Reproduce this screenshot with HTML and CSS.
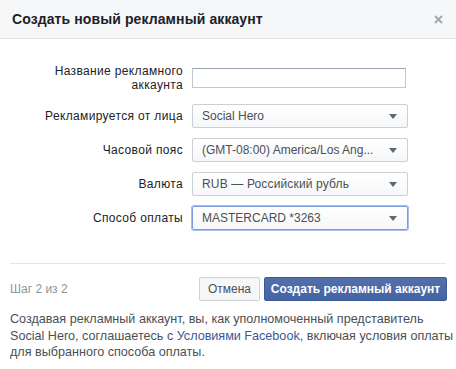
FILE: index.html
```html
<!DOCTYPE html>
<html lang="ru">
<head>
<meta charset="utf-8">
<link rel="stylesheet" href="styles.css">
</head>
<body>
<div class="dialog">
  <div class="header">
    <span class="title">Создать новый рекламный аккаунт</span>
    <span class="close">
      <svg width="9" height="9" viewBox="0 0 9 9"><path d="M1 1L8 8M8 1L1 8" stroke="#a3a6ab" stroke-width="1.8"/></svg>
    </span>
  </div>
  <div class="form">
    <div class="row row-first">
      <div class="label">Название рекламного<br>аккаунта</div>
      <div class="input"></div>
    </div>
    <div class="row">
      <div class="label">Рекламируется от лица</div>
      <div class="select"><span>Social Hero</span><i class="arrow"></i></div>
    </div>
    <div class="row">
      <div class="label">Часовой пояс</div>
      <div class="select"><span>(GMT-08:00) America/Los Ang...</span><i class="arrow"></i></div>
    </div>
    <div class="row">
      <div class="label">Валюта</div>
      <div class="select"><span class="cyr">RUB — Российский рубль</span><i class="arrow"></i></div>
    </div>
    <div class="row">
      <div class="label">Способ оплаты</div>
      <div class="select focus"><span>MASTERCARD *3263</span><i class="arrow"></i></div>
    </div>
  </div>
  <div class="footer">
    <span class="step">Шаг 2 из 2</span>
    <div class="buttons">
      <span class="btn cancel">Отмена</span>
      <span class="btn primary">Создать рекламный аккаунт</span>
    </div>
  </div>
  <p class="terms">Создавая рекламный аккаунт, вы, как уполномоченный представитель<br>Social Hero, соглашаетесь с <span class="link">Условиями Facebook</span>, включая условия оплаты<br>для выбранного способа оплаты.</p>
</div>
</body>
</html>
```
FILE: styles.css
```css
* { box-sizing: border-box; }
html, body { margin: 0; padding: 0; background: #fff; }
body {
  font-family: "Liberation Sans", Arial, sans-serif;
  font-size: 12px;
  color: #1d2129;
  width: 456px;
  height: 369px;
  overflow: hidden;
}
.header {
  height: 39px;
  background: #f6f7f9;
  border-bottom: 1px solid #e5e5e5;
  display: flex;
  align-items: center;
  justify-content: space-between;
  padding: 0 13px 0 12px;
}
.title {
  font-size: 14px;
  font-weight: bold;
  color: #1d2129;
  letter-spacing: 0.1px;
}
.close { display: flex; margin-top: 1px; }
.form {
  padding-top: 25px;
  display: flex;
  flex-direction: column;
  gap: 10px;
}
.row {
  display: flex;
  align-items: center;
}
.row-first { margin-bottom: 2px; }
.label {
  width: 183px;
  text-align: right;
  line-height: 14px;
  color: #1d2129;
  letter-spacing: 0.35px;
}
.input {
  margin-left: 9px;
  width: 214px;
  height: 20px;
  border: 1px solid #bdc7d8;
  border-top-color: #9aa4b6;
  background: #fff;
}
.select {
  margin-left: 9px;
  width: 216px;
  height: 24px;
  border: 1px solid #ccd0d5;
  border-radius: 2px;
  background: linear-gradient(#fff, #f6f7f9);
  display: flex;
  align-items: center;
  justify-content: space-between;
  padding: 0 10px 0 9px;
  color: #4b4f56;
}
.cyr { letter-spacing: 0.15px; }
.select.focus {
  border: 1px solid #7f9ce0;
  box-shadow: 0 0 0 1px #a9bcee;
}
.arrow {
  width: 0; height: 0;
  border-left: 4px solid transparent;
  border-right: 4px solid transparent;
  border-top: 5px solid #606770;
}
.footer {
  margin: 33px 10px 0 10px;
  border-top: 1px solid #e5e5e5;
  padding-top: 13px;
  display: flex;
  align-items: center;
  justify-content: space-between;
}
.step { color: #90949c; }
.buttons { display: flex; gap: 4px; margin-right: -1px; }
.btn {
  height: 24px;
  display: flex;
  align-items: center;
  border-radius: 2px;
  white-space: nowrap;
}
.cancel {
  width: 61px;
  justify-content: center;
  background: #f6f7f9;
  border: 1px solid #ced0d4;
  color: #4b4f56;
}
.primary {
  width: 183px;
  justify-content: center;
  background: linear-gradient(#5470aa, #4463a3);
  border: 1px solid #3b5a98;
  color: #fff;
  font-weight: bold;
}
.terms {
  margin: 10px 0 0 10px;
  font-size: 12.6px;
  line-height: 16.5px;
  color: #4b4f56;
  white-space: nowrap;
}
.link { color: #365899; }
```
